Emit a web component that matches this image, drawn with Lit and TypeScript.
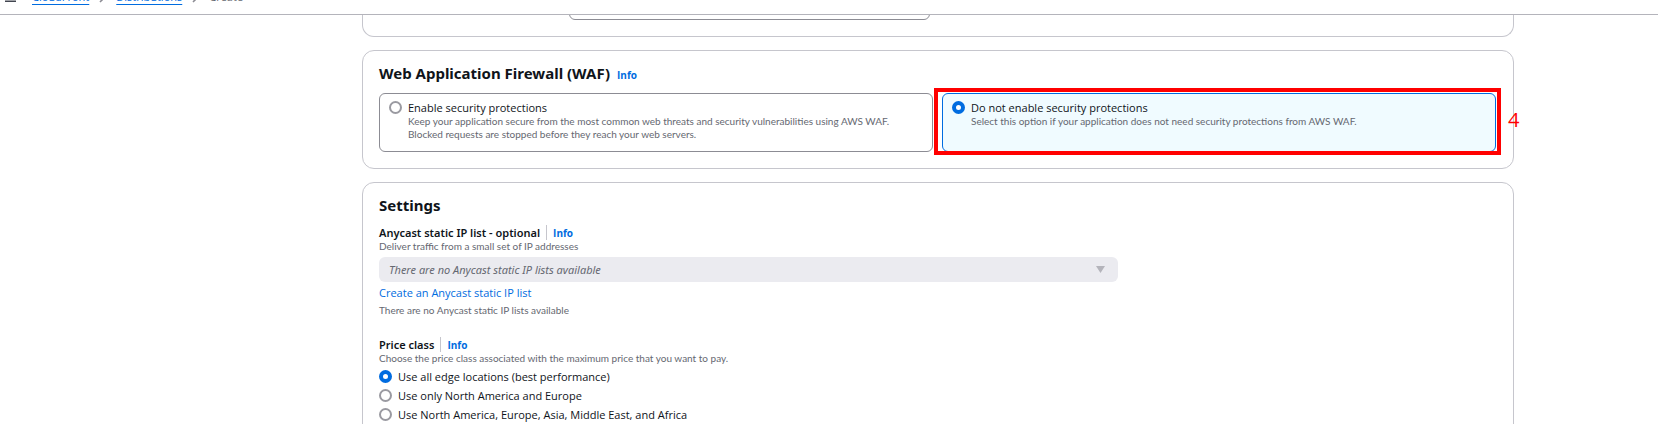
import { LitElement, html, css } from "lit";
import { customElement, property, state } from "lit/decorators.js";
import { classMap } from "lit/directives/class-map.js";

const radioStyles = css`
  input[type="radio"] {
    appearance: none;
    box-sizing: border-box;
    flex: none;
    width: 13px;
    height: 13px;
    margin: 0;
    border: 2px solid #9a9aa1;
    border-radius: 50%;
    background: #fff;
  }
  input[type="radio"]:checked {
    border: 4px solid #006ce0;
  }
`;

const textStyles = css`
  .hint {
    font-family: Lato, "Noto Sans", sans-serif;
    font-size: 10px;
    line-height: 13px;
    color: #656871;
  }
  a {
    color: #006ce0;
    text-decoration: none;
  }
  .info {
    font-family: "Open Sans", "Noto Sans", sans-serif;
    font-size: 10px;
    line-height: 14px;
    font-weight: 700;
  }
`;

@customElement("page-header")
class PageHeader extends LitElement {
  static styles = css`
    :host {
      display: block;
    }
    header {
      box-sizing: border-box;
      display: flex;
      align-items: flex-end;
      gap: 16px;
      height: 15px;
      padding: 0 5px;
      overflow: hidden;
      border-bottom: 1px solid #b4b4bb;
      background: #fff;
    }
    .menu {
      display: flex;
      padding: 0 0 12px;
      border: 0;
      background: none;
      color: #424650;
    }
    ol {
      display: flex;
      align-items: center;
      gap: 10px;
      margin: 0;
      padding: 0 0 9px;
      list-style: none;
      line-height: 16px;
      color: #656871;
    }
    li {
      display: flex;
      align-items: center;
      gap: 10px;
    }
    a {
      color: #006ce0;
      text-decoration: underline;
      text-decoration-thickness: 1px;
      text-underline-offset: 3px;
      text-decoration-skip-ink: none;
    }
    svg {
      display: block;
      color: #8c8c94;
    }
    .menu svg {
      color: #424650;
    }
  `;

  private chevron() {
    return html`<svg width="7" height="12" viewBox="0 0 7 12" fill="none" stroke="currentColor" stroke-width="1.6">
      <path d="M1 1l5 5-5 5" />
    </svg>`;
  }

  render() {
    return html`<header>
      <button class="menu" aria-label="Open navigation">
        <svg width="11" height="11" viewBox="0 0 11 11" stroke="currentColor" stroke-width="1.5">
          <path d="M0 1.750h11M0 6h11M0 10.250h11" />
        </svg>
      </button>
      <nav aria-label="Breadcrumbs">
        <ol>
          <li><a href="#cloudfront">CloudFront</a>${this.chevron()}</li>
          <li><a href="#distributions">Distributions</a>${this.chevron()}</li>
          <li>Create</li>
        </ol>
      </nav>
    </header>`;
  }
}

@customElement("option-tile")
class OptionTile extends LitElement {
  static styles = [
    radioStyles,
    textStyles,
    css`
      :host {
        display: grid;
        position: relative;
      }
      label {
        display: flex;
        gap: 6px;
        padding: 7px 9px 10px;
        border: 1px solid #8c8c94;
        border-radius: 6px;
        background: #fff;
      }
      .selected {
        border-color: #006ce0;
        background: #f0fbff;
      }
      .title {
        display: block;
        line-height: 14px;
      }
      .hint {
        display: block;
        max-width: 500px;
      }
      .callout {
        position: absolute;
        inset: -5px -5px -3px -8px;
        border: 4px solid #f00;
        pointer-events: none;
      }
      .step {
        position: absolute;
        left: calc(100% + 11px);
        top: 16px;
        font-size: 20px;
        line-height: 24px;
        color: #f00;
      }
    `,
  ];

  @property() heading = "";
  @property() text = "";
  @property() step = "";
  @property({ type: Boolean }) selected = false;

  private pick() {
    this.dispatchEvent(new CustomEvent("pick"));
  }

  render() {
    return html`<label class=${classMap({ selected: this.selected })}>
        <input type="radio" .checked=${this.selected} @change=${this.pick} />
        <span>
          <span class="title">${this.heading}</span>
          <span class="hint">${this.text}</span>
        </span>
      </label>
      ${this.step ? html`<div class="callout"><span class="step">${this.step}</span></div>` : null}`;
  }
}

@customElement("app-root")
class AppRoot extends LitElement {
  static styles = [
    radioStyles,
    textStyles,
    css`
      :host {
        display: block;
        height: 100vh;
        overflow: hidden;
        background: #fff;
        color: #0f141a;
        font-family: "Open Sans", "Noto Sans", sans-serif;
        font-size: 11px;
      }
      main {
        display: grid;
        gap: 13px;
        padding: 0 144px 0 362px;
      }
      .card {
        padding: 12px 17px 16px 16px;
        border: 1px solid #c6c6cd;
        border-radius: 12px;
      }
      .card.tail {
        padding-top: 0;
        border-top: 0;
        border-radius: 0 0 12px 12px;
      }
      .clip {
        display: flex;
        align-items: flex-end;
        height: 5px;
        padding-left: 17%;
        overflow: hidden;
      }
      .clip input {
        box-sizing: border-box;
        flex: none;
        width: 39%;
        height: 25px;
        border: 1px solid #8c8c94;
        border-radius: 6px;
        background: #fff;
      }
      .heading {
        display: flex;
        align-items: baseline;
        gap: 7px;
        margin-bottom: 10px;
        line-height: 20px;
      }
      h2 {
        margin: 0;
        font-family: "Noto Sans", sans-serif;
        font-size: 15px;
        font-weight: 700;
      }
      .tiles {
        display: grid;
        grid-template-columns: 1fr 1fr;
        gap: 9px;
      }
      .field + .field {
        margin-top: 20px;
      }
      .field,
      fieldset {
        display: grid;
        justify-items: start;
        gap: 4px;
        margin: 0;
        padding: 0;
        border: 0;
      }
      .label {
        display: flex;
        font-family: "Noto Sans", sans-serif;
        line-height: 15px;
        font-weight: 600;
      }
      .label .info {
        margin-left: 6px;
        padding: 1px 0 0 6px;
        border-left: 1px solid #c6c6cd;
      }
      .select {
        position: relative;
        width: 66.2%;
      }
      select {
        appearance: none;
        display: block;
        width: 100%;
        height: 25px;
        padding: 0 10px;
        border: 0;
        border-radius: 6px;
        background: #ebebf0;
        color: #656871;
        opacity: 1;
        font: italic 11px "Noto Sans", sans-serif;
      }
      .caret {
        position: absolute;
        right: 13px;
        top: 9px;
        fill: #b4b4bb;
      }
      .link {
        line-height: 14px;
      }
      .choice {
        display: flex;
        align-items: center;
        gap: 6px;
        line-height: 15px;
      }
    `,
  ];

  @state() private protection = 1;
  @state() private price = 0;

  private tiles = [
    {
      heading: "Enable security protections",
      text: "Keep your application secure from the most common web threats and security vulnerabilities using AWS WAF. Blocked requests are stopped before they reach your web servers.",
      step: "",
    },
    {
      heading: "Do not enable security protections",
      text: "Select this option if your application does not need security protections from AWS WAF.",
      step: "4",
    },
  ];

  private prices = [
    "Use all edge locations (best performance)",
    "Use only North America and Europe",
    "Use North America, Europe, Asia, Middle East, and Africa",
  ];

  render() {
    return html`<page-header></page-header>
      <main>
        <section class="card tail">
          <div class="clip"><input type="text" aria-label="Value" /></div>
        </section>

        <section class="card">
          <div class="heading">
            <h2>Web Application Firewall (WAF)</h2>
            <a class="info" href="#waf-info">Info</a>
          </div>
          <div class="tiles" role="radiogroup" aria-label="Web Application Firewall (WAF)">
            ${this.tiles.map(
              (t, i) => html`<option-tile
                .heading=${t.heading}
                .text=${t.text}
                .step=${t.step}
                .selected=${this.protection === i}
                @pick=${() => (this.protection = i)}
              ></option-tile>`
            )}
          </div>
        </section>

        <section class="card">
          <div class="heading"><h2>Settings</h2></div>
          <div class="field">
            <div>
              <div class="label">
                <label for="anycast">Anycast static IP list - optional</label>
                <a class="info" href="#anycast-info">Info</a>
              </div>
              <div class="hint">Deliver traffic from a small set of IP addresses</div>
            </div>
            <div class="select">
              <select id="anycast" disabled>
                <option>There are no Anycast static IP lists available</option>
              </select>
              <svg class="caret" width="9" height="7" viewBox="0 0 9 7"><path d="M0 0h9L4.500 7z" /></svg>
            </div>
            <a class="link" href="#create-list">Create an Anycast static IP list</a>
            <div class="hint">There are no Anycast static IP lists available</div>
          </div>
          <div class="field">
            <div>
              <div class="label">
                <span id="price-label">Price class</span>
                <a class="info" href="#price-info">Info</a>
              </div>
              <div class="hint">Choose the price class associated with the maximum price that you want to pay.</div>
            </div>
            <fieldset aria-labelledby="price-label">
              ${this.prices.map(
                (p, i) => html`<label class="choice">
                  <input
                    type="radio"
                    name="price"
                    .checked=${this.price === i}
                    @change=${() => (this.price = i)}
                  />${p}
                </label>`
              )}
            </fieldset>
          </div>
        </section>
      </main>`;
  }
}
